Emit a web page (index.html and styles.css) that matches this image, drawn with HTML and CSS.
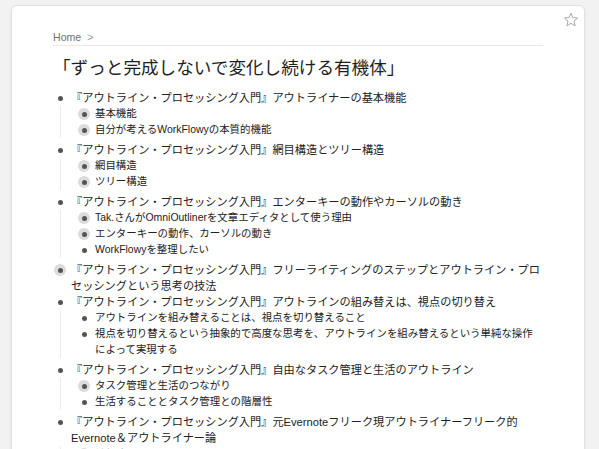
FILE: index.html
```html
<!DOCTYPE html>
<html lang="ja">

<head>
  <meta charset="UTF-8">
  <meta name="viewport" content="width=device-width, initial-scale=1.0">
  <title>ずっと完成しないで変化し続ける有機体</title>
  <link rel="stylesheet" href="styles.css">
</head>

<body>
  <div class="page">
    <a class="star" href="#" title="Star">
      <svg width="16" height="16" viewBox="0 0 16 16">
        <path d="M8 1.2 L9.9 5.6 L14.6 6 L11 9.1 L12.1 13.8 L8 11.3 L3.9 13.8 L5 9.1 L1.4 6 L6.1 5.6 Z" fill="none" stroke="#a8a8a8" stroke-width="1" stroke-linejoin="round" />
      </svg>
    </a>

    <div class="breadcrumbs">
      <a href="#">Home</a><span class="sep">&gt;</span>
    </div>

    <h1 class="title">「ずっと完成しないで変化し続ける有機体」</h1>

    <ul class="outline">
      <li>
        <div class="row"><span class="bullet"></span><span class="name">『アウトライン・プロセッシング入門』アウトライナーの基本機能</span></div>
        <ul class="children">
          <li><div class="row"><span class="bullet closed"></span><span class="name">基本機能</span></div></li>
          <li><div class="row"><span class="bullet closed"></span><span class="name">自分が考えるWorkFlowyの本質的機能</span></div></li>
        </ul>
      </li>
      <li>
        <div class="row"><span class="bullet"></span><span class="name">『アウトライン・プロセッシング入門』網目構造とツリー構造</span></div>
        <ul class="children">
          <li><div class="row"><span class="bullet closed"></span><span class="name">網目構造</span></div></li>
          <li><div class="row"><span class="bullet closed"></span><span class="name">ツリー構造</span></div></li>
        </ul>
      </li>
      <li>
        <div class="row"><span class="bullet"></span><span class="name">『アウトライン・プロセッシング入門』エンターキーの動作やカーソルの動き</span></div>
        <ul class="children">
          <li><div class="row"><span class="bullet closed"></span><span class="name">Tak.さんがOmniOutlinerを文章エディタとして使う理由</span></div></li>
          <li><div class="row"><span class="bullet closed"></span><span class="name">エンターキーの動作、カーソルの動き</span></div></li>
          <li><div class="row"><span class="bullet"></span><span class="name">WorkFlowyを整理したい</span></div></li>
        </ul>
      </li>
      <li>
        <div class="row"><span class="bullet closed"></span><span class="name">『アウトライン・プロセッシング入門』フリーライティングのステップとアウトライン・プロセッシングという思考の技法</span></div>
      </li>
      <li>
        <div class="row"><span class="bullet"></span><span class="name">『アウトライン・プロセッシング入門』アウトラインの組み替えは、視点の切り替え</span></div>
        <ul class="children">
          <li><div class="row"><span class="bullet"></span><span class="name">アウトラインを組み替えることは、視点を切り替えること</span></div></li>
          <li><div class="row"><span class="bullet"></span><span class="name">視点を切り替えるという抽象的で高度な思考を、アウトラインを組み替えるという単純な操作によって実現する</span></div></li>
        </ul>
      </li>
      <li>
        <div class="row"><span class="bullet"></span><span class="name">『アウトライン・プロセッシング入門』自由なタスク管理と生活のアウトライン</span></div>
        <ul class="children">
          <li><div class="row"><span class="bullet closed"></span><span class="name">タスク管理と生活のつながり</span></div></li>
          <li><div class="row"><span class="bullet"></span><span class="name">生活することとタスク管理との階層性</span></div></li>
        </ul>
      </li>
      <li>
        <div class="row"><span class="bullet"></span><span class="name">『アウトライン・プロセッシング入門』元Evernoteフリーク現アウトライナーフリーク的Evernote＆アウトライナー論</span></div>
        <ul class="children">
          <li><div class="row"><span class="bullet closed"></span><span class="name">はじめに</span></div></li>
        </ul>
      </li>
    </ul>
  </div>
</body>

</html>
```

FILE: styles.css
```css
* {
  box-sizing: border-box;
}

html,
body {
  overflow: hidden;
}

body {
  margin: 0;
  background: #f2f2f3;
  color: #222;
  font-family: "Liberation Sans", "Noto Sans CJK JP", sans-serif;
}

.page {
  position: relative;
  width: 574px;
  min-height: 600px;
  margin: 5px 0 0 11px;
  padding: 0 41px;
  background: #fff;
  border: 1px solid #e2e2e2;
  border-radius: 6px;
  box-shadow: 0 1px 3px rgba(0, 0, 0, .08);
}

.star {
  position: absolute;
  top: 6px;
  right: 5px;
  display: block;
  width: 16px;
  height: 16px;
}

.star svg {
  display: block;
}

.breadcrumbs {
  padding-top: 23px;
  padding-bottom: 0;
  font-size: 10.6px;
  line-height: 16px;
  color: #707070;
  border-bottom: 1px solid #e8e8e8;
}

.breadcrumbs a {
  color: #707070;
  text-decoration: none;
}

.breadcrumbs .sep {
  margin-left: 6px;
  color: #999;
}

.title {
  margin: 10px 0 0 0;
  font-size: 17.6px;
  line-height: 24px;
  font-weight: normal;
  color: #1e1e1e;
}

.outline,
.children {
  list-style: none;
  margin: 0;
  padding: 0;
}

.outline {
  margin: 10px 0 0 -3px;
}

.row {
  display: flex;
  align-items: flex-start;
  font-size: 11.2px;
  line-height: 16px;
}

.children .row {
  font-size: 10.45px;
}

.bullet {
  flex: none;
  position: relative;
  width: 20px;
  height: 16px;
  margin-right: 1px;
}

.bullet::after {
  content: "";
  position: absolute;
  left: 7.5px;
  top: 5.5px;
  width: 5px;
  height: 5px;
  border-radius: 50%;
  background: #555;
}

.bullet.closed::before {
  content: "";
  position: absolute;
  left: 4px;
  top: 2px;
  width: 12px;
  height: 12px;
  border-radius: 50%;
  background: #dcdcdc;
}

.children {
  margin: 0 0 4px 10px;
  padding-left: 13px;
  border-left: 1px solid #ececec;
}
```
